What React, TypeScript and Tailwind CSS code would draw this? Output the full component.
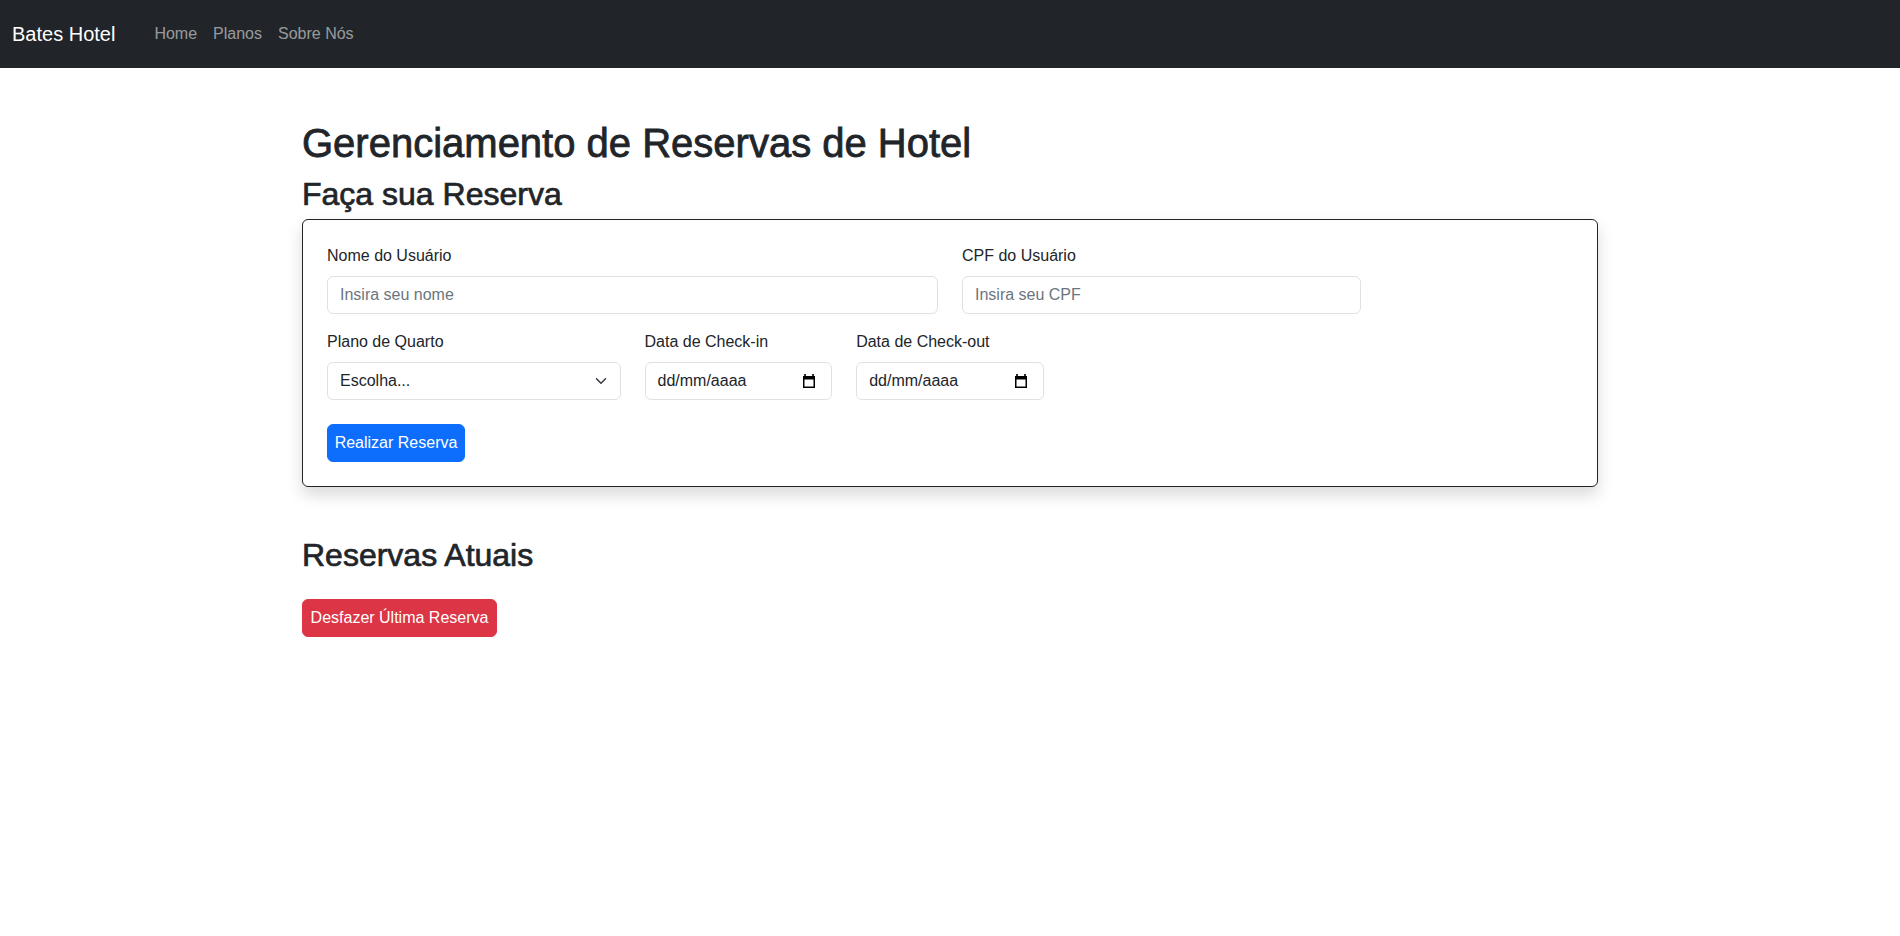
import React from "react";

function CalendarIcon() {
  return (
    <svg width="12" height="14" viewBox="0 0 12 14" aria-hidden="true">
      <rect x="0.75" y="2.75" width="10.5" height="10.5" fill="none" stroke="#000" strokeWidth="1.5" />
      <rect x="0" y="2" width="12" height="3.5" fill="#000" />
      <rect x="1.2" y="0" width="1.6" height="2.5" fill="#000" />
      <rect x="9.2" y="0" width="1.6" height="2.5" fill="#000" />
    </svg>
  );
}

function DateField({ label }: { label: string }) {
  return (
    <div className="col-span-2">
      <label className="block mb-2 text-base leading-6">{label}</label>
      <div className="flex items-center justify-between h-[38px] pl-3 pr-4 border border-[#dee2e6] rounded-[6px] bg-white text-base leading-6 text-[#212529]">
        <span>dd/mm/aaaa</span>
        <CalendarIcon />
      </div>
    </div>
  );
}

export default function App() {
  const links = ["Home", "Planos", "Sobre Nós"];
  return (
    <div className="min-h-screen bg-white font-['Liberation_Sans',Arial,sans-serif] text-[#212529]">
      <nav className="h-[68px] bg-[#212529] flex items-center px-3">
        <a className="text-[20px] leading-[30px] text-white">Bates Hotel</a>
        <ul className="flex ml-[31px]">
          {links.map((l) => (
            <li key={l}>
              <a className="block px-2 text-base leading-6 text-[rgba(255,255,255,0.55)]">{l}</a>
            </li>
          ))}
        </ul>
      </nav>

      <main className="max-w-[1320px] mx-auto px-3">
        <h1 className="mt-[51px] mb-2 text-[40px] leading-[48px] font-medium [-webkit-text-stroke:0.8px_#212529]">
          Gerenciamento de Reservas de Hotel
        </h1>
        <h2 className="mb-[6px] text-[32px] leading-[38.4px] font-medium [-webkit-text-stroke:0.7px_#212529]">
          Faça sua Reserva
        </h2>

        <form className="border border-[#212529] rounded-[6px] p-6 bg-white shadow-[0_8px_16px_rgba(0,0,0,0.15)]">
          <div className="grid grid-cols-12 gap-x-6 mb-4">
            <div className="col-span-6">
              <label className="block mb-2 text-base leading-6">Nome do Usuário</label>
              <input
                placeholder="Insira seu nome"
                className="block w-full h-[38px] px-3 border border-[#dee2e6] rounded-[6px] text-base leading-6 outline-none placeholder:text-[#6c757d]"
              />
            </div>
            <div className="col-span-4">
              <label className="block mb-2 text-base leading-6">CPF do Usuário</label>
              <input
                placeholder="Insira seu CPF"
                className="block w-full h-[38px] px-3 border border-[#dee2e6] rounded-[6px] text-base leading-6 outline-none placeholder:text-[#6c757d]"
              />
            </div>
          </div>

          <div className="grid grid-cols-12 gap-x-6 mb-6">
            <div className="col-span-3">
              <label className="block mb-2 text-base leading-6">Plano de Quarto</label>
              <div className="relative">
                <select className="appearance-none block w-full h-[38px] pl-3 pr-9 border border-[#dee2e6] rounded-[6px] bg-white text-base leading-6 text-[#212529] outline-none">
                  <option>Escolha...</option>
                </select>
                <svg
                  className="absolute right-3 top-1/2 -translate-y-1/2 pointer-events-none"
                  width="16"
                  height="12"
                  viewBox="0 0 16 16"
                  aria-hidden="true"
                >
                  <path
                    d="m2 5 6 6 6-6"
                    fill="none"
                    stroke="#343a40"
                    strokeWidth="2"
                    strokeLinecap="round"
                    strokeLinejoin="round"
                  />
                </svg>
              </div>
            </div>
            <DateField label="Data de Check-in" />
            <DateField label="Data de Check-out" />
          </div>

          <button
            type="button"
            className="block w-[138px] h-[38px] bg-[#0d6efd] border border-[#0d6efd] rounded-[6px] text-white text-base leading-6 text-center"
          >
            Realizar Reserva
          </button>
        </form>

        <h2 className="mt-[49px] text-[32px] leading-[38.4px] font-medium [-webkit-text-stroke:0.7px_#212529]">
          Reservas Atuais
        </h2>
        <div className="mt-6 flex">
          <button
            type="button"
            className="w-[195px] h-[38px] bg-[#dc3545] border border-[#dc3545] rounded-[6px] text-white text-base leading-6 text-center"
          >
            Desfazer Última Reserva
          </button>
        </div>
      </main>
    </div>
  );
}
